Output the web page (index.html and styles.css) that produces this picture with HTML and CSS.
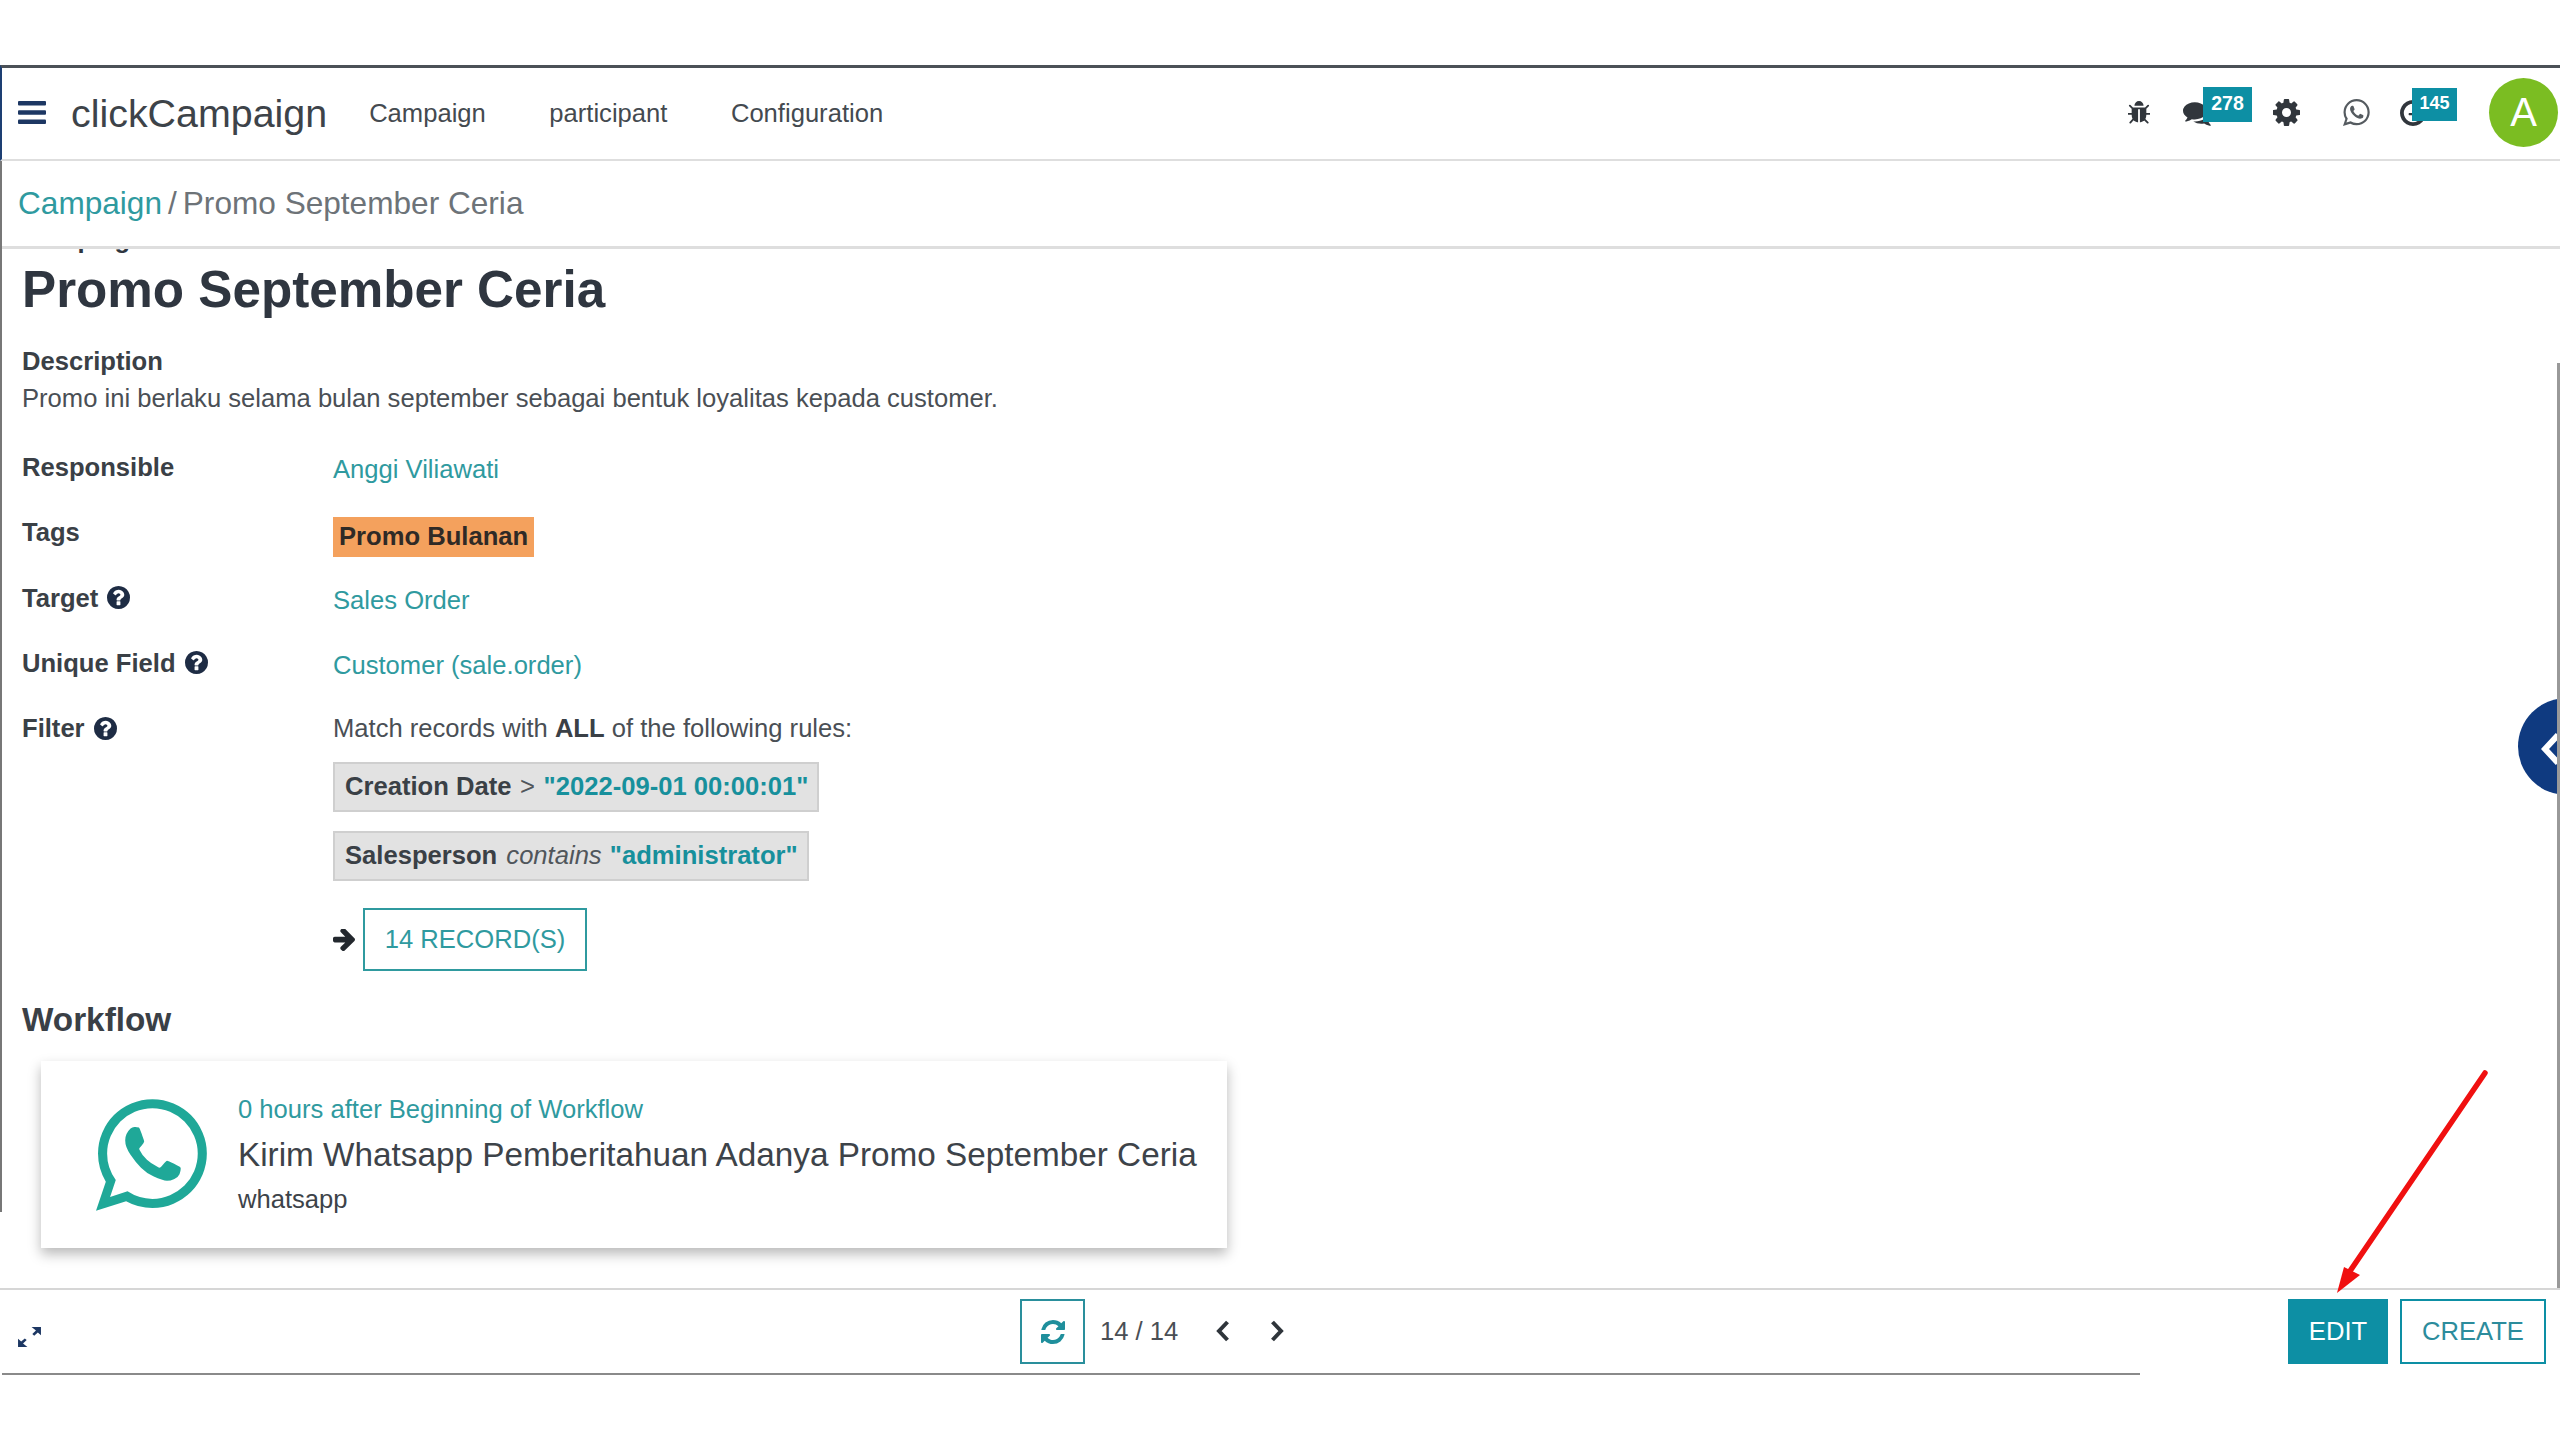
FILE: index.html
```html
<!DOCTYPE html>
<html lang="en">
<head>
<meta charset="utf-8">
<title>clickCampaign</title>
<link rel="stylesheet" href="styles.css">
</head>
<body>
<div class="app">
  <header class="topbar">
    <svg class="burger" viewBox="0 0 28 23"><rect width="28" height="4.4" rx="1"/><rect y="9.3" width="28" height="4.4" rx="1"/><rect y="18.6" width="28" height="4.4" rx="1"/></svg>
    <span class="brand">clickCampaign</span>
    <nav class="menu"><span>Campaign</span><span>participant</span><span>Configuration</span></nav>
    <div class="systray">
      <span class="tray tray-bug"><svg viewBox="128 128 1536 1536"><path d="M1696 960q0 26-19 45t-45 19h-224q0 171-67 290l208 209q19 19 19 45t-19 45q-18 19-45 19t-45-19l-198-197q-5 5-15 13t-42 28.5-65 36.5-82 29-97 13v-896h-128v896q-51 0-101.5-13.5t-87-33-66-39-43.5-32.5l-15-14-183 207q-20 21-48 21-24 0-43-16-19-18-20.5-44.5t15.5-46.5l202-227q-58-114-58-274h-224q-26 0-45-19t-19-45 19-45 45-19h224v-294l-173-173q-19-19-19-45t19-45 45-19 45 19l173 173h844l173-173q19-19 45-19t45 19 19 45-19 45l-173 173v294h224q26 0 45 19t19 45zm-480-576h-640q0-133 93.5-226.5t226.5-93.5 226.5 93.5 93.5 226.5z"/></svg></span>
      <span class="tray tray-chat"><svg viewBox="0 128 1792 1536"><path d="M1408 768q0 139-94 257t-256.5 186.5-353.5 68.5q-86 0-176-16-124 88-278 128-36 9-86 16h-3q-11 0-20.5-8t-11.5-21q-1-3-1-6.5t.5-6.5 2-6l2.5-5 3.5-5.5 4-5 4.5-5 4-4.5q5-6 23-25t26-29.5 22.5-29 25-38.5 20.5-44q-124-72-195-177t-71-224q0-139 94-257t256.5-186.5 353.5-68.5 353.5 68.5 256.5 186.5 94 257zm384 256q0 120-71 224.5t-195 176.5q10 24 20.5 44t25 38.5 22.5 29 26 29.5 23 25q1 1 4 4.5t4.5 5 4 5 3.5 5.5l2.5 5 2 6 .5 6.5-1 6.5q-3 14-13 22t-22 7q-50-7-86-16-154-40-278-128-90 16-176 16-271 0-472-132 58 4 88 4 161 0 309-45t264-129q125-92 192-212t67-254q0-77-23-152 129 71 204 178t75 230z"/></svg><b class="badge badge-chat">278</b></span>
      <span class="tray tray-gear"><svg viewBox="128 128 1536 1536"><path d="M1152 896q0-106-75-181t-181-75-181 75-75 181 75 181 181 75 181-75 75-181zm512-109v222q0 12-8 23t-20 13l-185 28q-19 54-39 91 35 50 107 138 10 12 10 25t-9 23q-27 37-99 108t-94 71q-12 0-26-9l-138-108q-44 23-91 38-16 136-29 186-7 28-36 28h-222q-14 0-24.5-8.5t-11.5-21.5l-28-184q-49-16-90-37l-141 107q-10 9-25 9-14 0-25-11-126-114-165-168-7-10-7-23 0-12 8-23 15-21 51-66.5t54-70.5q-27-50-41-99l-183-27q-13-2-21-12.5t-8-23.5v-222q0-12 8-23t19-13l186-28q14-46 39-92-40-57-107-138-10-12-10-24 0-10 9-23 26-36 98.5-107.5t94.5-71.5q13 0 26 10l138 107q44-23 91-38 16-136 29-186 7-28 36-28h222q14 0 24.5 8.5t11.5 21.5l28 184q49 16 90 37l142-107q9-9 24-9 13 0 25 10 129 119 165 170 7 8 7 22 0 12-8 23-15 21-51 66.5t-54 70.5q26 50 41 98l183 28q13 2 21 12.5t8 23.5z"/></svg></span>
      <span class="tray tray-wa"><svg viewBox="128 120 1552 1552"><path d="M1113 974q13 0 97.5 44t89.5 53q2 5 2 15 0 33-17 76-16 39-71 65.5t-102 26.5q-57 0-190-62-98-45-170-118t-148-185q-72-107-71-194v-8q3-91 74-158 24-22 52-22 6 0 18 1.5t19 1.5q19 0 26.5 6.5t15.5 27.5q8 20 33 88t25 75q0 21-34.5 57.5t-34.5 46.5q0 7 5 15 34 73 102 137 56 53 151 101 12 7 22 7 15 0 54-48.5t52-48.5zm-203 530q127 0 243.5-50t200.5-134 134-200.5 50-243.5-50-243.5-134-200.5-200.5-134-243.5-50-243.5 50-200.5 134-134 200.5-50 243.5q0 203 120 368l-79 233 242-77q158 104 345 104zm0-1382q153 0 292.5 60t240.5 161 161 240.5 60 292.5-60 292.5-161 240.5-240.5 161-292.5 60q-195 0-365-94l-417 134 136-405q-108-178-108-389 0-153 60-292.5t161-240.5 240.5-161 292.5-60z"/></svg></span>
      <span class="tray tray-clock"><svg viewBox="128 128 1536 1536"><path d="M1024 544v448q0 14-9 23t-23 9h-320q-14 0-23-9t-9-23v-64q0-14 9-23t23-9h224v-352q0-14 9-23t23-9h64q14 0 23 9t9 23zm416 352q0-148-73-273t-198-198-273-73-273 73-198 198-73 273 73 273 198 198 273 73 273-73 198-198 73-273zm224 0q0 209-103 385.5t-279.5 279.5-385.5 103-385.5-103-279.5-279.5-103-385.5 103-385.5 279.5-279.5 385.5-103 385.5 103 279.5 279.5 103 385.5z"/></svg><b class="badge badge-clock">145</b></span>
      <span class="avatar">A</span>
    </div>
  </header>
  <div class="crumbs"><a class="link">Campaign</a><i class="sep">/</i><span>Promo September Ceria</span></div>
  <main class="sheet">
    <div class="overline">Campaign</div>
    <h1 class="title">Promo September Ceria</h1>
    <div class="desc-label">Description</div>
    <p class="desc">Promo ini berlaku selama bulan september sebagai bentuk loyalitas kepada customer.</p>
    <div class="fields">
      <div class="field">
        <div class="label">Responsible</div>
        <div class="value"><a class="link">Anggi Viliawati</a></div>
      </div>
      <div class="field">
        <div class="label">Tags</div>
        <div class="value"><span class="tag">Promo Bulanan</span></div>
      </div>
      <div class="field">
        <div class="label">Target <svg class="help" viewBox="128 128 1536 1536"><path d="M1024 1376v-192q0-14-9-23t-23-9h-192q-14 0-23 9t-9 23v192q0 14 9 23t23 9h192q14 0 23-9t9-23zm256-672q0-88-55.5-163t-138.5-116-170-41q-243 0-371 213-15 24 8 42l132 100q7 6 19 6 16 0 25-12 53-68 86-92 34-24 86-24 48 0 85.5 26t37.5 59q0 38-20 61t-68 45q-63 28-115.5 86.5t-52.5 125.5v36q0 14 9 23t23 9h192q14 0 23-9t9-23q0-19 21.5-49.5t54.5-49.5q32-18 49-28.5t46-35 44.5-48 28-60.5 12.5-81zm384 192q0 209-103 385.5t-279.5 279.5-385.5 103-385.5-103-279.5-279.5-103-385.5 103-385.5 279.5-279.5 385.5-103 385.5 103 279.5 279.5 103 385.5z"/></svg></div>
        <div class="value"><a class="link">Sales Order</a></div>
      </div>
      <div class="field">
        <div class="label">Unique Field <svg class="help" viewBox="128 128 1536 1536"><path d="M1024 1376v-192q0-14-9-23t-23-9h-192q-14 0-23 9t-9 23v192q0 14 9 23t23 9h192q14 0 23-9t9-23zm256-672q0-88-55.5-163t-138.5-116-170-41q-243 0-371 213-15 24 8 42l132 100q7 6 19 6 16 0 25-12 53-68 86-92 34-24 86-24 48 0 85.5 26t37.5 59q0 38-20 61t-68 45q-63 28-115.5 86.5t-52.5 125.5v36q0 14 9 23t23 9h192q14 0 23-9t9-23q0-19 21.5-49.5t54.5-49.5q32-18 49-28.5t46-35 44.5-48 28-60.5 12.5-81zm384 192q0 209-103 385.5t-279.5 279.5-385.5 103-385.5-103-279.5-279.5-103-385.5 103-385.5 279.5-279.5 385.5-103 385.5 103 279.5 279.5 103 385.5z"/></svg></div>
        <div class="value"><a class="link">Customer (sale.order)</a></div>
      </div>
      <div class="field field-filter">
        <div class="label">Filter <svg class="help" viewBox="128 128 1536 1536"><path d="M1024 1376v-192q0-14-9-23t-23-9h-192q-14 0-23 9t-9 23v192q0 14 9 23t23 9h192q14 0 23-9t9-23zm256-672q0-88-55.5-163t-138.5-116-170-41q-243 0-371 213-15 24 8 42l132 100q7 6 19 6 16 0 25-12 53-68 86-92 34-24 86-24 48 0 85.5 26t37.5 59q0 38-20 61t-68 45q-63 28-115.5 86.5t-52.5 125.5v36q0 14 9 23t23 9h192q14 0 23-9t9-23q0-19 21.5-49.5t54.5-49.5q32-18 49-28.5t46-35 44.5-48 28-60.5 12.5-81zm384 192q0 209-103 385.5t-279.5 279.5-385.5 103-385.5-103-279.5-279.5-103-385.5 103-385.5 279.5-279.5 385.5-103 385.5 103 279.5 279.5 103 385.5z"/></svg></div>
        <div class="value">
          <div class="match">Match records with <b>ALL</b> of the following rules:</div>
          <div class="rule"><b>Creation Date</b> <span class="rule-op">&gt;</span> <b class="rule-val">"2022-09-01 00:00:01"</b></div>
          <div class="rule"><b>Salesperson</b> <em>contains</em> <b class="rule-val">"administrator"</b></div>
          <div class="records">
            <svg class="records-arrow" viewBox="128 256 1472 1472"><path d="M1600 960q0 54-37 91l-651 651q-39 37-91 37-51 0-90-37l-75-75q-38-38-38-91t38-91l293-293h-704q-52 0-84.5-37.5t-32.5-90.5v-128q0-53 32.5-90.5t84.5-37.5h704l-293-294q-38-36-38-90t38-90l75-75q38-38 90-38 53 0 91 38l651 651q37 35 37 90z"/></svg>
            <span class="records-btn">14 RECORD(S)</span>
          </div>
        </div>
      </div>
    </div>
    <h2 class="workflow">Workflow</h2>
    <article class="card">
      <svg class="card-icon" viewBox="128 120 1552 1552"><path d="M1113 974q13 0 97.5 44t89.5 53q2 5 2 15 0 33-17 76-16 39-71 65.5t-102 26.5q-57 0-190-62-98-45-170-118t-148-185q-72-107-71-194v-8q3-91 74-158 24-22 52-22 6 0 18 1.5t19 1.5q19 0 26.5 6.5t15.5 27.5q8 20 33 88t25 75q0 21-34.5 57.5t-34.5 46.5q0 7 5 15 34 73 102 137 56 53 151 101 12 7 22 7 15 0 54-48.5t52-48.5zm-203 530q127 0 243.5-50t200.5-134 134-200.5 50-243.5-50-243.5-134-200.5-200.5-134-243.5-50-243.5 50-200.5 134-134 200.5-50 243.5q0 203 120 368l-79 233 242-77q158 104 345 104zm0-1382q153 0 292.5 60t240.5 161 161 240.5 60 292.5-60 292.5-161 240.5-240.5 161-292.5 60q-195 0-365-94l-417 134 136-405q-108-178-108-389 0-153 60-292.5t161-240.5 240.5-161 292.5-60z"/></svg>
      <div class="card-body">
        <a class="link card-when">0 hours after Beginning of Workflow</a>
        <div class="card-title">Kirim Whatsapp Pemberitahuan Adanya Promo September Ceria</div>
        <div class="card-type">whatsapp</div>
      </div>
    </article>
  </main>
  <footer class="footer">
    <div class="foot-left">
      <svg class="expand" viewBox="0 0 24 24" preserveAspectRatio="none"><path d="M14 1h9v9l-3-3-3.5 3.5-1.8-1.8L18.2 5z"/><path d="M10 23H1v-9l3 3 3.5-3.5 1.8 1.8L5.8 19z"/></svg>
    </div>
    <div class="pager">
      <span class="reload"><svg viewBox="128 128 1536 1536"><path d="M1639 1056q0 5-1 7-64 268-268 434.5t-478 166.5q-146 0-282.5-55t-243.5-157l-129 129q-19 19-45 19t-45-19-19-45v-448q0-26 19-45t45-19h448q26 0 45 19t19 45-19 45l-137 137q71 66 161 102t187 36q134 0 250-65t186-179q11-17 53-117 8-23 30-23h192q13 0 22.5 9.5t9.5 22.5zm25-800v448q0 26-19 45t-45 19h-448q-26 0-45-19t-19-45 19-45l138-138q-148-137-349-137-134 0-250 65t-186 179q-11 17-53 117-8 23-30 23h-199q-13 0-22.5-9.5t-9.5-22.5v-7q65-268 270-434.5t480-166.5q146 0 284 55.5t245 156.5l130-129q19-19 45-19t45 19 19 45z"/></svg></span>
      <span class="count">14 / 14</span>
      <svg class="chev chev-prev" viewBox="0 0 16 24"><path d="M12.5 3 4 12l8.5 9"/></svg>
      <svg class="chev chev-next" viewBox="0 0 16 24"><path d="M3.5 3 12 12l-8.5 9"/></svg>
    </div>
    <div class="actions">
      <span class="btn btn-edit">EDIT</span>
      <span class="btn btn-create">CREATE</span>
    </div>
  </footer>
  <svg class="pointer" viewBox="0 0 180 240"><path class="pointer-shaft" d="M165 13 28 214"/><path class="pointer-head" d="M17 233 24 207 40 215z"/></svg>
  <span class="handle"><svg viewBox="0 0 20 36"><path d="M17 4 4 18l13 14"/></svg></span>
</div>
</body>
</html>
```
FILE: styles.css
```css
* { box-sizing: border-box; }
html, body { margin: 0; height: 100%; overflow: hidden; background: #fff; }
body { font-family: "Liberation Sans", Arial, sans-serif; color: #4a4f55; font-size: 25.6px; line-height: 30px; }
a.link { color: #2f9a9f; text-decoration: none; }

.app { position: relative; margin-top: 65px; height: 1310px; display: flex; flex-direction: column; }
.app::before { content: ""; position: absolute; left: 0; top: 96px; width: 2px; height: 1051px; background: #777; }
.app::after { content: ""; position: absolute; right: 0; top: 298px; width: 3px; height: 925px; background: #999; }

.topbar { flex: 0 0 96px; display: flex; align-items: center; border-top: 3px solid #4b5157; border-left: 2px solid #1d3f73; border-bottom: 2px solid #dedede; padding-left: 16px; padding-right: 2px; padding-bottom: 2px; }
.burger { width: 28px; height: 23px; fill: #1d3763; flex: none; }
.brand { margin-left: 25px; font-size: 39.4px; line-height: 46px; color: #3d4349; }
.menu { margin-left: 42px; display: flex; gap: 63.5px; color: #444a50; }
.systray { margin-left: auto; display: flex; align-items: center; }
.tray { position: relative; display: block; flex: none; }
.tray svg { display: block; width: 100%; height: 100%; fill: #31363c; }
.tray-bug { width: 22px; height: 24px; }
.tray-chat { width: 30px; height: 26px; margin-left: 33px; }
.tray-gear { width: 27px; height: 27px; margin-left: 60px; }
.tray-wa { width: 27px; height: 27px; margin-left: 43px; }
.tray-wa svg { fill: #555b60; }
.tray-clock { width: 26px; height: 26px; margin-left: 30px; }
.badge { position: absolute; background: #0d8fa4; color: #fff; font-size: 19.5px; line-height: 30px; text-align: center; }
.badge-chat { left: 20px; top: -13px; width: 49px; height: 35px; padding-top: 1px; }
.badge-clock { left: 12px; top: -12px; width: 45px; height: 33px; font-size: 18px; }
.avatar { width: 69px; height: 69px; margin-left: 63px; border-radius: 50%; background: #7bbd22; color: #fff; font-size: 40px; line-height: 69px; text-align: center; flex: none; }

.crumbs { flex: 0 0 88px; display: flex; align-items: center; padding-left: 18px; padding-bottom: 2px; border-bottom: 3px solid #dedede; font-size: 31.6px; line-height: 38px; color: #6d7378; }
.crumbs .link { color: #2f9a9f; }
.sep { font-style: normal; margin: 0 6px 0 6px; }

.sheet { flex: 1 1 0; overflow: hidden; padding-left: 22px; min-height: 0; }
.overline { margin-top: -25px; height: 30px; font-weight: 700; color: #2f3640; }
.title { margin: 6px 0 0; font-size: 51.2px; line-height: 60px; font-weight: 700; color: #2f3640; }
.desc-label { margin-top: 26px; font-weight: 700; color: #3a4046; }
.desc { margin: 7px 0 0; color: #4a4f55; }
.fields { margin-top: 39px; }
.field { display: grid; grid-template-columns: 311px 1fr; min-height: 65.3px; }
.label { font-weight: 700; color: #3a4046; display: flex; align-items: center; gap: 9px; height: 30px; }
.value { padding-top: 2px; }
.help { width: 23px; height: 23px; fill: #1e2c44; flex: none; }
.tag { display: inline-block; height: 40px; padding: 0 6px; background: #f4a15d; color: #2f2a26; font-weight: 700; line-height: 38px; margin-top: -2px; vertical-align: top; }
.match { margin-top: -2px; }
.match b { color: #3a4046; }
.rule { margin-top: 19px; height: 50px; width: max-content; padding: 0 9px 0 10px; background: #e2e2e2; border: 2px solid #cfcfcf; line-height: 44px; color: #50565b; }
.rule b { color: #3a4046; }
.rule b.rule-val { color: #17909c; }
.rule em { font-style: italic; margin: 0 1px 0 2px; }
.rule-op { margin: 0 1.5px; }
.rule + .rule { margin-top: 19px; }
.records { display: flex; align-items: center; gap: 8px; margin-top: 27px; }
.records-arrow { width: 22px; height: 22px; fill: #23282e; flex: none; }
.records-btn { display: block; height: 63px; width: 224px; border: 2px solid #2f9a9f; color: #2f9a9f; text-align: center; line-height: 59px; }
.workflow { margin: 29px 0 0; font-size: 33.3px; line-height: 40px; font-weight: 700; color: #3a4046; }
.card { margin: 21px 0 0 19px; width: 1186px; height: 187px; display: flex; align-items: center; gap: 30px; padding: 0 0 0 55px; background: #fff; box-shadow: 0 6px 12px rgba(0, 0, 0, .28); }
.card-icon { width: 112px; height: 114px; fill: #1fa898; flex: none; }
.card-body { display: flex; flex-direction: column; padding-bottom: 2px; }
.card-when { line-height: 30px; }
.card-title { font-size: 33.3px; line-height: 40px; margin-top: 11px; color: #3d4349; white-space: nowrap; }
.card-type { margin-top: 9px; line-height: 30px; color: #3d4349; }

.footer { position: relative; flex: 0 0 87px; display: flex; align-items: flex-start; border-top: 2px solid #d6d6d6; padding-top: 9px; }
.footer::after { content: ""; position: absolute; left: 2px; bottom: 0; width: 2138px; height: 2px; background: #8a8a8a; }
.foot-left { flex: 0 0 1020px; padding: 27px 0 0 17px; }
.expand { display: block; width: 25px; height: 22px; fill: #1d3763; }
.pager { display: flex; align-items: center; height: 65px; }
.reload { width: 65px; height: 65px; border: 2px solid #2a8f9c; display: flex; align-items: center; justify-content: center; }
.reload svg { width: 24px; height: 24px; fill: #1f8f9c; }
.count { margin-left: 15px; width: 77px; color: #4a4f55; margin-top: -2px; white-space: nowrap; }
.chev { width: 16px; height: 24px; fill: none; stroke: #2f353b; stroke-width: 4; margin-top: -2px; }
.chev-prev { margin-left: 38px; }
.chev-next { margin-left: 38px; }
.actions { margin-left: auto; display: flex; gap: 12px; padding-right: 14px; }
.btn { display: block; height: 65px; font-size: 25.6px; line-height: 61px; text-align: center; border: 2px solid #0d8fa4; }
.btn-edit { width: 100px; background: #0d8fa4; color: #fff; }
.btn-create { width: 146px; color: #2c8c9c; }

.pointer { position: absolute; left: 2320px; top: 995px; width: 180px; height: 240px; overflow: visible; }
.pointer-shaft { fill: none; stroke: #f01010; stroke-width: 5.5; stroke-linecap: round; }
.pointer-head { fill: #f01010; }
.handle { position: absolute; left: 2518px; top: 633px; width: 97px; height: 97px; border-radius: 50%; background: #0f3a80; }
.handle svg { position: absolute; left: 23px; top: 33px; width: 20px; height: 36px; fill: none; stroke: #fff; stroke-width: 6; }
```
